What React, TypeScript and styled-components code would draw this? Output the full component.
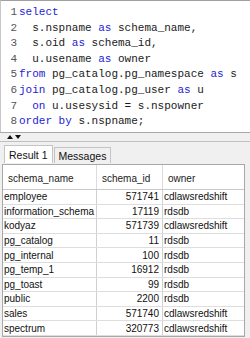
import React from 'react';
import styled, { createGlobalStyle } from 'styled-components';

const GlobalStyle = createGlobalStyle`
  html, body {
    margin: 0;
    padding: 0;
    background: #f0f0f0;
  }
`;

const Frame = styled.div`
  width: 250px;
  height: 338px;
  overflow: hidden;
  background: #f0f0f0;
  display: flex;
  flex-direction: column;
`;

const Editor = styled.div`
  height: 132px;
  background: #fff;
  border-top: 1px solid #a0a0a0;
  border-left: 1px solid #c8c8c8;
  padding-top: 4px;
  box-sizing: border-box;
  font-family: 'Liberation Mono', 'Courier New', monospace;
  font-size: 11px;
`;

const Line = styled.div`
  display: flex;
  height: 15.6px;
  line-height: 15.6px;
  white-space: pre;
`;

const LineNo = styled.span`
  width: 16px;
  text-align: right;
  color: #555;
  margin-right: 2px;
`;

const Code = styled.span`
  color: #1a1a1a;
`;

const Kw = styled.span`
  color: #2323d6;
`;

const Splitter = styled.div`
  height: 8px;
  border-top: 1px solid #a8a8a8;
  border-bottom: 1px solid #c0c0c0;
  display: flex;
  align-items: center;
  gap: 2px;
  padding-left: 7px;
`;

const Arrow = styled.span<{ $down?: boolean }>`
  width: 0;
  height: 0;
  border-left: 3.5px solid transparent;
  border-right: 3.5px solid transparent;
  ${(p) =>
    p.$down ? 'border-top: 4px solid #111;' : 'border-bottom: 4px solid #111;'}
`;

const TabStrip = styled.div`
  display: flex;
  align-items: flex-end;
  height: 19px;
  margin-top: 2px;
  padding-left: 4px;
  font-family: 'Liberation Sans', Arial, sans-serif;
  font-size: 10.5px;
`;

const Tab = styled.div<{ $active?: boolean }>`
  height: ${(p) => (p.$active ? '18px' : '16px')};
  box-sizing: border-box;
  padding: 0 4px;
  display: flex;
  align-items: center;
  background: ${(p) => (p.$active ? '#fff' : '#f0f0f0')};
  border: 1px solid #c4c4c4;
  border-bottom: none;
  color: #111;
  margin-right: 1px;
`;

const Grid = styled.div`
  margin: 1px 5px 0 2px;
  background: #fff;
  border: 1px solid #a8a8a8;
  font-family: 'Liberation Sans', Arial, sans-serif;
  font-size: 10px;
  color: #111;
`;

const Row = styled.div<{ $head?: boolean }>`
  display: grid;
  grid-template-columns: 94px 66px 1fr;
  height: ${(p) => (p.$head ? '25px' : '14.6px')};
  box-sizing: border-box;
  border-bottom: 1px solid ${(p) => (p.$head ? '#c8c8c8' : '#dedede')};
`;

const Cell = styled.div<{ $num?: boolean; $head?: boolean }>`
  display: flex;
  align-items: center;
  justify-content: ${(p) => (p.$num ? 'flex-end' : 'flex-start')};
  padding: ${(p) => (p.$head ? '2px 0 0 5px' : p.$num ? '0 3px 0 0' : '0 0 0 1px')};
  border-right: 1px solid ${(p) => (p.$head ? '#dcdcdc' : '#d0d0d0')};
  white-space: nowrap;
  overflow: hidden;
  color: ${(p) => (p.$head ? '#222' : '#111')};
  &:last-child {
    border-right: none;
  }
`;

// each line is a list of [text, isKeyword]
const sql: [string, boolean][][] = [
  [['select', true]],
  [['  s.nspname ', false], ['as', true], [' schema_name,', false]],
  [['  s.oid ', false], ['as', true], [' schema_id,', false]],
  [['  u.usename ', false], ['as', true], [' owner', false]],
  [['from', true], [' pg_catalog.pg_namespace ', false], ['as', true], [' s', false]],
  [['join', true], [' pg_catalog.pg_user ', false], ['as', true], [' u', false]],
  [['  ', false], ['on', true], [' u.usesysid = s.nspowner', false]],
  [['order by', true], [' s.nspname;', false]],
];

const rows: [string, number, string][] = [
  ['employee', 571741, 'cdlawsredshift'],
  ['information_schema', 17119, 'rdsdb'],
  ['kodyaz', 571739, 'cdlawsredshift'],
  ['pg_catalog', 11, 'rdsdb'],
  ['pg_internal', 100, 'rdsdb'],
  ['pg_temp_1', 16912, 'rdsdb'],
  ['pg_toast', 99, 'rdsdb'],
  ['public', 2200, 'rdsdb'],
  ['sales', 571740, 'cdlawsredshift'],
  ['spectrum', 320773, 'cdlawsredshift'],
];

const App = () => {
  return (
    <Frame>
      <GlobalStyle />
      <Editor>
        {sql.map((parts, i) => (
          <Line key={i}>
            <LineNo>{i + 1}</LineNo>
            <Code>
              {parts.map(([text, kw], j) =>
                kw ? <Kw key={j}>{text}</Kw> : <React.Fragment key={j}>{text}</React.Fragment>
              )}
            </Code>
          </Line>
        ))}
      </Editor>
      <Splitter>
        <Arrow />
        <Arrow $down />
      </Splitter>
      <TabStrip>
        <Tab $active>Result 1</Tab>
        <Tab>Messages</Tab>
      </TabStrip>
      <Grid>
        <Row $head>
          <Cell $head>schema_name</Cell>
          <Cell $head>schema_id</Cell>
          <Cell $head>owner</Cell>
        </Row>
        {rows.map(([name, id, owner]) => (
          <Row key={name}>
            <Cell>{name}</Cell>
            <Cell $num>{id}</Cell>
            <Cell>{owner}</Cell>
          </Row>
        ))}
      </Grid>
    </Frame>
  );
};

export default App;
